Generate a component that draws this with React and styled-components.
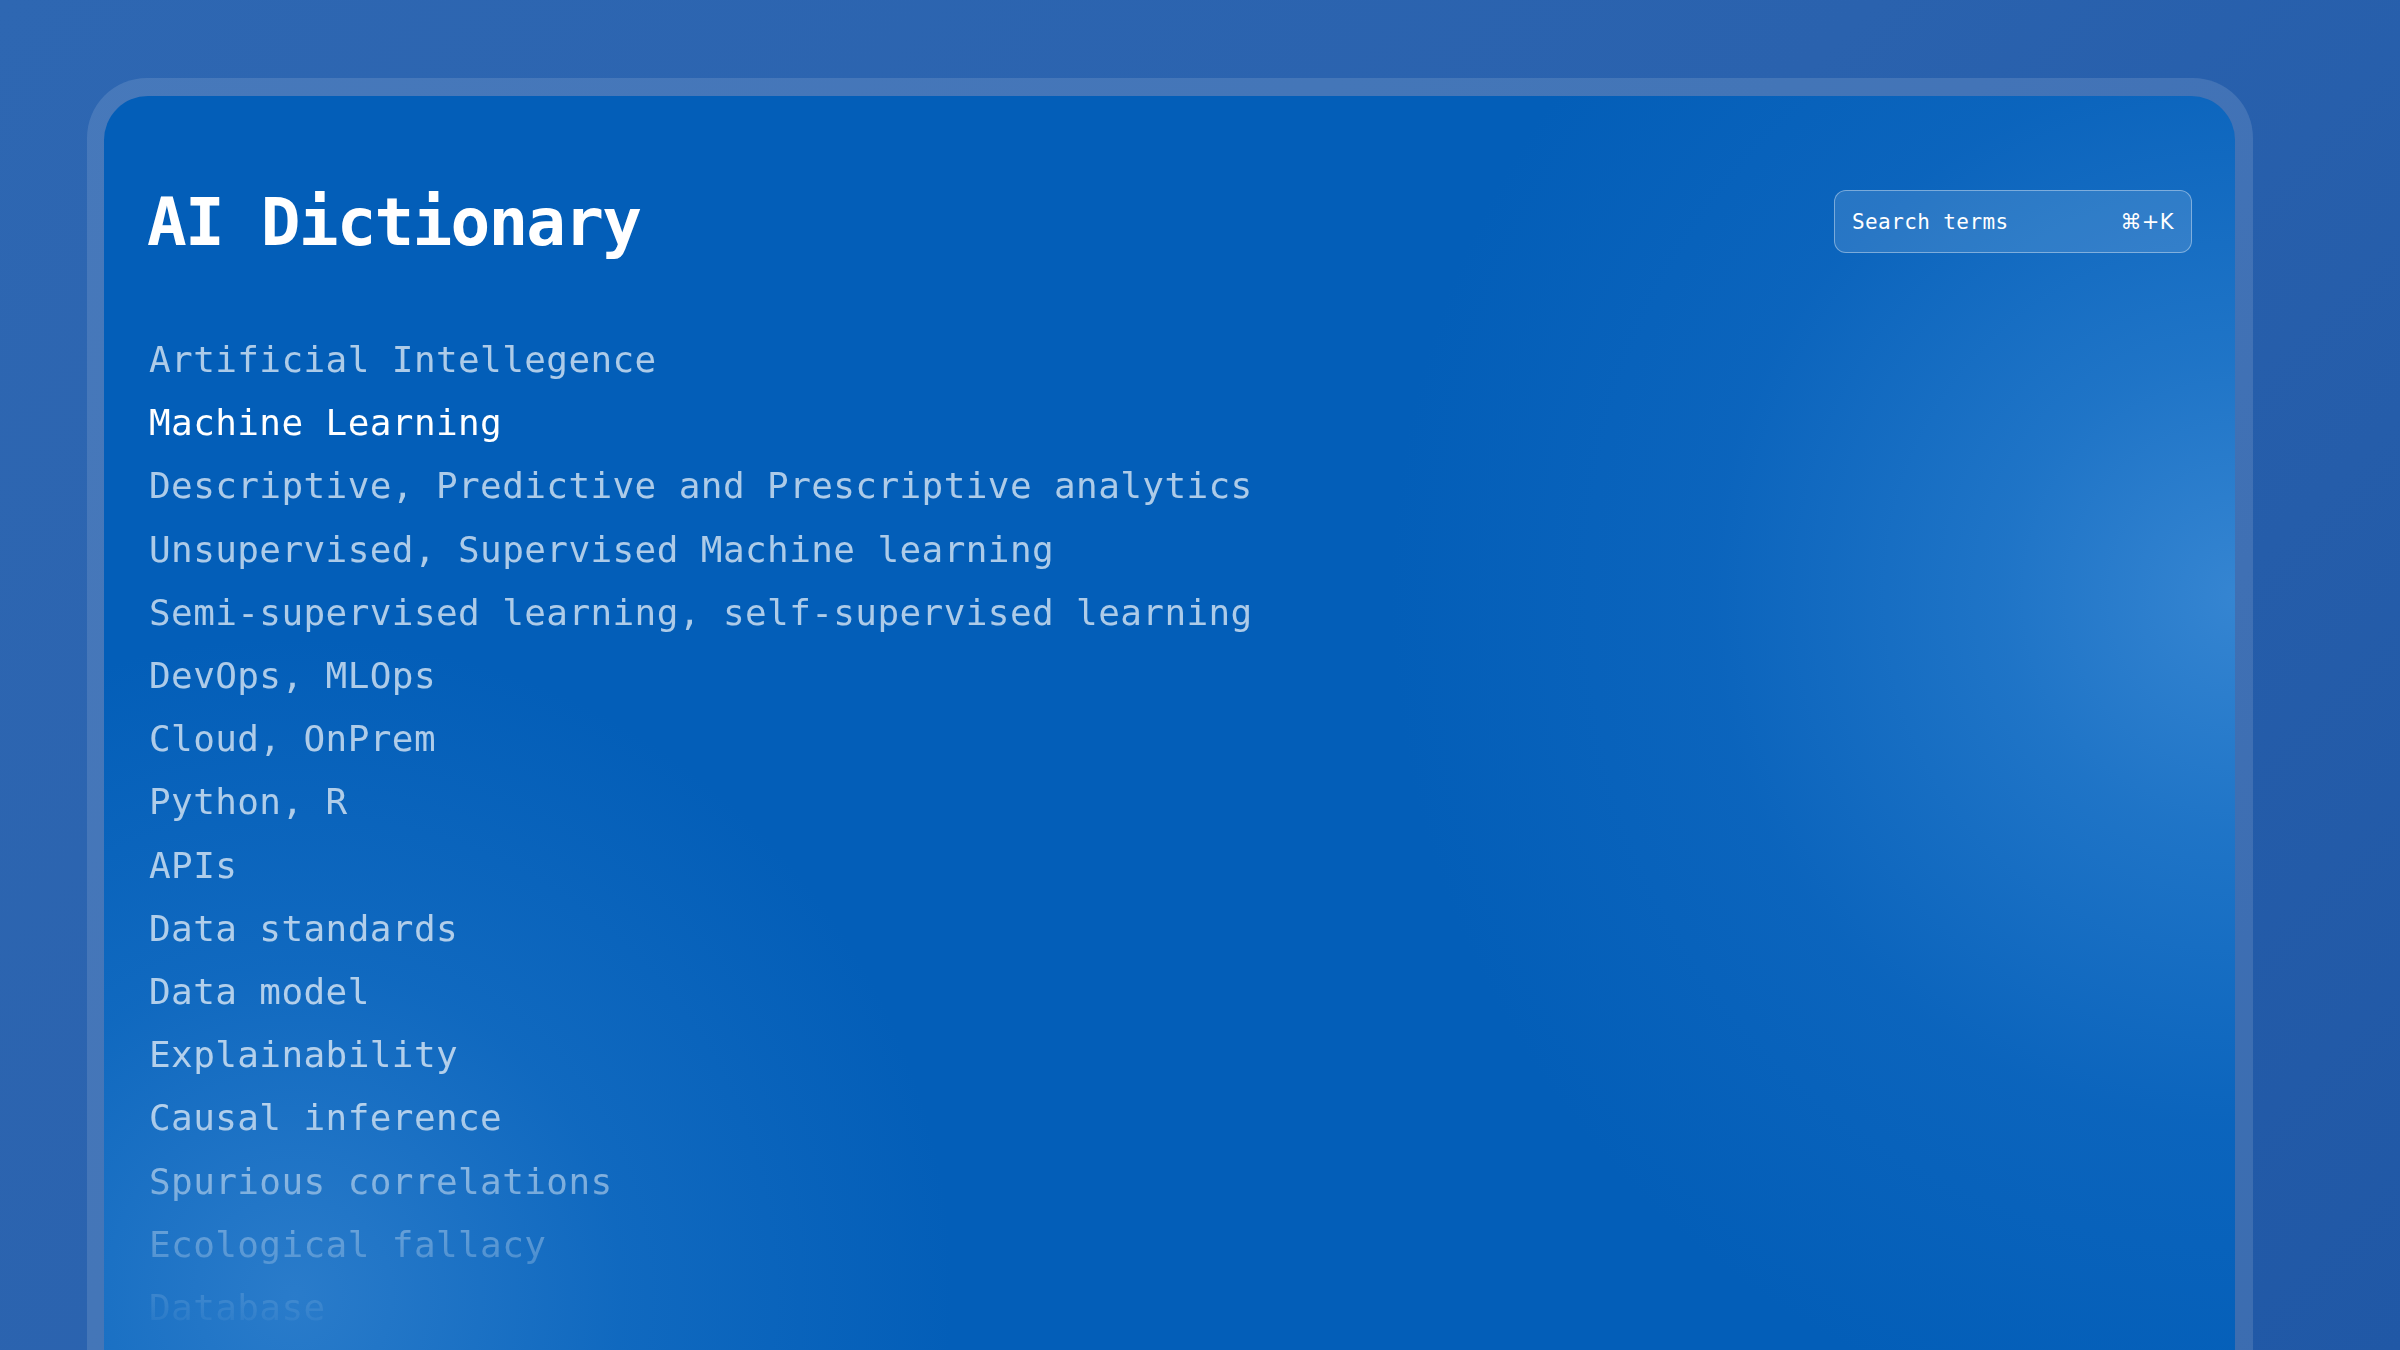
import React from 'react';
import styled, { createGlobalStyle } from 'styled-components';

const terms = [
  'Artificial Intellegence',
  'Machine Learning',
  'Descriptive, Predictive and Prescriptive analytics',
  'Unsupervised, Supervised Machine learning',
  'Semi-supervised learning, self-supervised learning',
  'DevOps, MLOps',
  'Cloud, OnPrem',
  'Python, R',
  'APIs',
  'Data standards',
  'Data model',
  'Explainability',
  'Causal inference',
  'Spurious correlations',
  'Ecological fallacy',
  'Database',
];

const GlobalStyle = createGlobalStyle`
  html, body {
    margin: 0;
    padding: 0;
    overflow: hidden;
  }
  body {
    background: linear-gradient(135deg, #2e67b2 0%, #2a62ae 50%, #2058a6 100%);
  }
`;

const Page = styled.div`
  box-sizing: border-box;
  width: 100vw;
  height: 100vh;
  padding: 78px 147px 0 87px;
  overflow: hidden;
`;

const Frame = styled.div`
  box-sizing: border-box;
  height: calc(100% + 120px);
  padding: 18px 18px 0 17px;
  border-radius: 60px;
  background: rgba(255, 255, 255, 0.12);
`;

// glows: one on the right edge, one low on the left
const Card = styled.main`
  box-sizing: border-box;
  height: 100%;
  padding: 94px 43px 0 43px;
  border-radius: 44px;
  background:
    radial-gradient(850px circle at 2135px 500px, rgba(62, 140, 214, 0.85) 0%, rgba(48, 130, 208, 0.62) 28%, rgba(30, 115, 200, 0.3) 62%, rgba(3, 95, 185, 0) 100%),
    radial-gradient(660px circle at 190px 1200px, rgba(58, 136, 210, 0.7) 0%, rgba(40, 125, 205, 0.35) 50%, rgba(3, 95, 185, 0) 100%),
    #035eb8;
  font-family: "DejaVu Sans Mono", "Liberation Mono", monospace;
`;

const Header = styled.header`
  display: flex;
  justify-content: space-between;
  align-items: flex-start;
`;

const Title = styled.h1`
  margin: 0;
  font-size: 66px;
  line-height: 1;
  font-weight: 700;
  letter-spacing: -1.8px;
  color: #ffffff;
`;

const Search = styled.div`
  box-sizing: border-box;
  width: 358px;
  height: 63px;
  display: flex;
  align-items: center;
  justify-content: space-between;
  padding: 0 17px 0 17px;
  border: 1.5px solid rgba(255, 255, 255, 0.38);
  border-radius: 12px;
  background: rgba(255, 255, 255, 0.12);
  color: #ffffff;
  font-size: 21px;
  letter-spacing: 0.4px;
`;

const Shortcut = styled.span`
  font-family: "DejaVu Sans", "Noto Sans", sans-serif;
  font-size: 21px;
`;

const List = styled.ul`
  list-style: none;
  margin: 72px 0 0 2px;
  padding: 0;
  -webkit-mask-image: linear-gradient(to bottom, #000 780px, transparent 1010px);
  mask-image: linear-gradient(to bottom, #000 780px, transparent 1010px);
`;

const Term = styled.li`
  font-size: 36px;
  line-height: 63.2px;
  letter-spacing: 0.4px;
  white-space: nowrap;
  color: ${props => (props.active ? '#ffffff' : 'rgba(255, 255, 255, 0.68)')};
`;

const App = () => {
  return (
    <>
      <GlobalStyle />
      <Page>
        <Frame>
          <Card>
            <Header>
              <Title>AI Dictionary</Title>
              <Search>
                <span>Search terms</span>
                <Shortcut>⌘+K</Shortcut>
              </Search>
            </Header>
            <List>
              {terms.map(t => (
                <Term key={t} active={t === 'Machine Learning'}>{t}</Term>
              ))}
            </List>
          </Card>
        </Frame>
      </Page>
    </>
  );
};

export default App;
